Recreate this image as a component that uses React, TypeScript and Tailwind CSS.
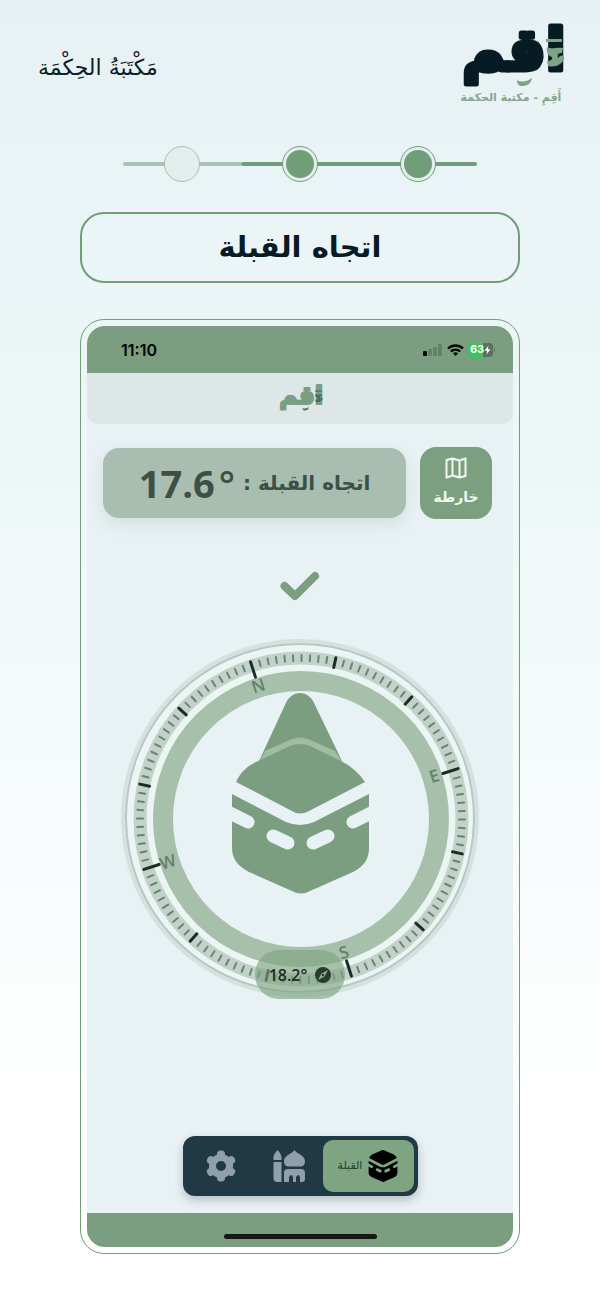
import type { ReactNode } from 'react';

const ARABIC = "font-['DejaVu_Sans',sans-serif]";

const steps = [
  { label: 'الخطوة الثالثة', done: false, bar: 'bg-[#a9c4b2] rounded-l-full' },
  { label: 'الخطوة الثانية', done: true, bar: 'bg-[#6f9e79] rounded-l-full' },
  { label: 'الخطوة الأولى', done: true, bar: 'bg-[#6f9e79] rounded-r-full' },
];

/* Brand word with the leaf ornament over the alef */
function BrandMark({ className, color, accent }: { className: string; color: string; accent: string }) {
  return (
    <svg className={`overflow-visible ${className}`} viewBox="0 0 112 68" role="img" aria-label="أقم">
      <text
        x="59"
        y="46"
        direction="rtl"
        textAnchor="middle"
        fontSize="58"
        className="font-['DejaVu_Sans',sans-serif] font-bold"
        fill={color}
        stroke={color}
        strokeWidth="5"
        strokeLinejoin="round"
      >
        اقم
      </text>
      <path
        d="M91 15h16v3H91zM92 23c5 3 9 0 16 1l-1 5c-4 0-5 2-4 5 3-4 7-3 6 1-2 5-8 9-16 7l-1-5c4 0 6-2 5-4-4-1-6-5-5-10z"
        fill={accent}
      />
      <path d="M62 56c5 3 11 1 15-2-1 6-5 8-10 8-3 0-5-2-5-6z" fill={accent} />
    </svg>
  );
}

function KaabaIcon({ id, className, wide }: { id: string; className: string; wide?: boolean }) {
  return (
    <svg className={className} viewBox="0 0 137 150" fill="currentColor" aria-hidden="true">
      <mask id={id}>
        <rect width="137" height="150" fill="white" />
        <g stroke="black" strokeWidth="13" strokeLinecap="round">
          <path d="M-8 66 16 78" />
          <path d="M145 66 121 78" />
          <path d="m41 92 15 7" />
          <path d="m96 92-15 7" />
        </g>
      </mask>
      {wide ? (
        <path d="M4 38C8 29 15 22 24 18L58 2q10-4 20 0l31 15c10 5 18 12 24 21L77 67q-9 5-17 0z" />
      ) : (
        <path d="M4 38C6 31 11 25 20 20L58 3q10-5 20 0l39 17c9 5 14 11 16 18L77 67q-9 5-17 0z" />
      )}
      <path
        mask={`url(#${id})`}
        d="M0 50 54 78q14 6 28 0l55-28v54c0 12-6 19-16 24L78 147q-9 5-18 0L17 128C6 122 0 115 0 104z"
      />
    </svg>
  );
}

const cardinals = [
  { name: 'N', x: 0, y: -140 },
  { name: 'E', x: 140, y: 0 },
  { name: 'S', x: 0, y: 140 },
  { name: 'W', x: -140, y: 0 },
];

function Dial({ rotation }: { rotation: number }) {
  const ticks = Array.from({ length: 120 }, (_, i) => i * 3);

  return (
    <svg className="h-[360px] w-[360px]" viewBox="0 0 360 360" role="img" aria-label="البوصلة">
      <circle cx="180" cy="180" r="177" fill="none" stroke="#d5e1df" strokeWidth="4" />
      <circle cx="180" cy="180" r="174" fill="#ebf6f4" stroke="#b9c6c4" strokeWidth="2" />
      <circle cx="181" cy="181" r="161" fill="none" stroke="#c1d2c8" strokeWidth="13" />
      <circle cx="181" cy="181" r="138" fill="#e8f1f4" stroke="#a7c0ac" strokeWidth="20" />
      <g transform={`translate(181 181) rotate(${rotation})`}>
        {ticks.map((deg) => {
          const cardinal = deg % 90 === 0;
          const major = deg % 30 === 0;
          return (
            <line
              key={deg}
              y1={major ? -165 : -164}
              y2={cardinal ? -149 : major ? -155 : -158}
              transform={`rotate(${deg})`}
              stroke={major ? '#1d2a26' : '#6f8177'}
              strokeWidth={major ? 3 : 2}
              strokeLinecap="round"
            />
          );
        })}
        {cardinals.map((c) => (
          <text
            key={c.name}
            x={c.x}
            y={c.y + 6}
            textAnchor="middle"
            fontSize="17"
            className="font-['Open_Sans',sans-serif] font-semibold"
            fill="#64806c"
          >
            {c.name}
          </text>
        ))}
      </g>
      {/* Pointer behind the Kaaba */}
      <path d="M139 123 165 67c6-16 24-16 30 0l27 56z" fill="#7c9e80" />
      <path d="M145 113 172 101q8-3 16 0l27 12 7 11-41-14-42 14z" fill="#a0bda2" />
    </svg>
  );
}

function StatusBar() {
  return (
    <div className="flex h-[47px] items-center justify-between bg-[#7c9e80] pl-[34px] pr-[18px]">
      <time className="font-['Inter',sans-serif] text-base font-semibold text-black">11:10</time>
      <div className="flex items-center gap-1">
        <svg className="h-3 w-5" viewBox="0 0 20 12" aria-hidden="true">
          <rect y="7" width="4" height="5" rx="1" fill="#050806" />
          <rect x="5" y="5" width="4" height="7" rx="1" fill="#628169" />
          <rect x="10" y="3" width="4" height="9" rx="1" fill="#628169" />
          <rect x="15" y="0" width="4" height="12" rx="1" fill="#628169" />
        </svg>
        <svg className="h-3 w-[17px]" viewBox="0 0 17 12" fill="none" stroke="#050806" strokeWidth="2.400" aria-hidden="true">
          <path d="M1 4.500a10.800 10.800 0 0 1 15 0" />
          <path d="M3.800 7.500a6.800 6.800 0 0 1 9.400 0" />
          <path d="M8.500 12 6 9.500a3.600 3.600 0 0 1 5 0z" fill="#050806" stroke="none" />
        </svg>
        <div className="flex items-center">
          <div className="flex h-[14px] w-[25px] items-center justify-center rounded bg-linear-to-r from-[#35c759] from-62% to-[#5b705f] to-62% text-white">
            <span className="font-['Inter',sans-serif] text-[11px] font-bold leading-none">63</span>
            <svg className="h-[10px] w-[7px]" viewBox="0 0 7 9" fill="currentColor" aria-hidden="true">
              <path d="M4.500 0 .5 5.200h2.700L2.500 9l4-5.200H3.800z" />
            </svg>
          </div>
          <div className="ml-px h-1 w-px rounded-r bg-[#5b705f]" />
        </div>
      </div>
    </div>
  );
}

function TabButton({ label, children }: { label: string; children: ReactNode }) {
  return (
    <button type="button" aria-label={label} className="flex h-full flex-1 items-center justify-center text-[#8f9fab]">
      {children}
    </button>
  );
}

function TabBar() {
  return (
    <nav className="flex h-[60px] w-[235px] items-center rounded-xl bg-[#213845] p-1 shadow-[0_4px_10px_rgba(30,50,60,0.25)]">
      <TabButton label="الإعدادات">
        <svg className="h-8 w-8" viewBox="-16 -16 32 32" aria-hidden="true">
          <circle r="8.500" fill="none" stroke="currentColor" strokeWidth="7" />
          {[0, 60, 120, 180, 240, 300].map((deg) => (
            <rect key={deg} x="-4" y="-15.500" width="8" height="9" rx="3.500" fill="currentColor" transform={`rotate(${deg})`} />
          ))}
        </svg>
      </TabButton>
      <TabButton label="الصلاة">
        <svg className="h-8 w-8" viewBox="0 0 32 32" fill="currentColor" aria-hidden="true">
          <path d="M4.500 0C7 3 8.500 5 8.500 7v3h-8V7c0-2 1.500-4 4-7z" />
          <path d="M.5 12h8v20h-4q-4 0-4-4z" />
          <path d="M21.500 0c1 3 10.500 5 10.500 11q0 5-4 5.500H15q-4-.5-4-5.500c0-6 9.500-8 10.500-11z" />
          <path d="M11 23q0-4 4-4h13q4 0 4 4v6q0 3-3 3h-2v-5q-1.500-4-4 0v5h-3v-5q-1.500-4-4 0v5h-5z" />
        </svg>
      </TabButton>
      <button
        type="button"
        aria-current="page"
        className="flex h-full w-[91px] items-center justify-center gap-1.5 rounded-[10px] bg-[#7fa482] text-black"
      >
        <span dir="rtl" className={`${ARABIC} text-[11px] text-[#25402f]`}>القبلة</span>
        <KaabaIcon id="tab-kaaba" className="h-8 w-[30px]" />
      </button>
    </nav>
  );
}

function Phone() {
  return (
    <section className="mt-9 w-full rounded-3xl border border-[#6f9e78] p-[6px]">
      <div className="flex flex-col items-center overflow-hidden rounded-[18px] bg-[#e8f1f4]">
        <div className="w-full">
          <StatusBar />
        </div>
        <header className="flex h-[51px] w-full items-center justify-center rounded-b-xl bg-[#dee7e7]">
          <BrandMark className="h-[29px] w-12" color="#7c9e80" accent="#4d7157" />
        </header>

        {/* Bearing */}
        <div className="mt-[23px] flex w-full items-center gap-3.5 pl-4 pr-[21px]">
          <div
            dir="rtl"
            className="flex h-[70px] flex-1 items-center justify-center gap-2 rounded-2xl bg-[#a9bdb1] text-[#3d5044] shadow-[0_6px_16px_rgba(120,150,130,0.18)]"
          >
            <h2 className={`${ARABIC} text-xl font-bold`}>اتجاه القبلة :</h2>
            <p dir="ltr" className="flex gap-1 font-['Open_Sans',sans-serif] text-[38px] font-bold leading-none">
              17.6<span className="font-semibold">°</span>
            </p>
          </div>
          <button
            type="button"
            className="flex h-[72px] w-[72px] flex-col items-center justify-center gap-1.5 rounded-2xl bg-[#7c9f7f] text-[#f0f8f5]"
          >
            <svg className="h-[22px] w-[22px]" viewBox="0 0 22 22" fill="none" stroke="currentColor" strokeWidth="2" strokeLinejoin="round" aria-hidden="true">
              <path d="M1.500 3 7.500 1.500l7 2 6-2V19l-6 1.500-7-2-6 2zM7.500 1.500v17M14.500 3.500v17" />
            </svg>
            <span dir="rtl" className={`${ARABIC} text-sm font-bold leading-6`}>خارطة</span>
          </button>
        </div>

        <svg className="mt-[51px] h-8 w-10" viewBox="0 0 40 32" fill="none" stroke="#7c9e80" strokeWidth="8" strokeLinecap="round" strokeLinejoin="round" aria-hidden="true">
          <path d="M4.500 16 15 26 35 6" />
        </svg>

        {/* Compass */}
        <div className="relative mt-9">
          <Dial rotation={-17.8} />
          <KaabaIcon id="dial-kaaba" wide className="absolute left-28 top-[106px] h-[150px] w-[137px] text-[#7c9e80]" />
          <div className="absolute bottom-[-1px] left-1/2 flex h-[49px] w-[90px] -translate-x-1/2 items-center justify-center gap-2 rounded-3xl bg-[#7fa583]/65 text-[#1f2d25]">
            <span className="font-['Open_Sans',sans-serif] text-base font-semibold">18.2°</span>
            <svg className="h-4 w-4" viewBox="0 0 16 16" aria-hidden="true">
              <circle cx="8" cy="8" r="8" fill="#2a3c31" />
              <path d="m13 3-3.500 6.500L3 13l3.500-6.500z" fill="#8fb193" />
              <circle cx="8" cy="8" r="1.200" fill="#2a3c31" />
            </svg>
          </div>
        </div>

        <div className="mb-[17px] mt-[138px]">
          <TabBar />
        </div>
        <div className="flex h-[34px] w-full items-end justify-center bg-[#7c9e80] pb-2">
          <div className="h-[5px] w-[153px] rounded-full bg-[#141816]" />
        </div>
      </div>
    </section>
  );
}

export default function App() {
  return (
    <main className="min-h-screen bg-linear-to-b from-[#e7f1f4] via-[#eff8f8] via-40% to-white to-85% pb-[46px]">
      <header className="flex items-start justify-between pl-[38px] pr-[33px] pt-6">
        <p dir="rtl" className={`${ARABIC} mt-6 text-[22px] font-normal leading-10 text-[#0a2028]`}>مَكْتَبَةُ الحِكْمَة</p>
        <div className="flex flex-col items-center">
          <BrandMark className="h-[68px] w-[112px]" color="#061b24" accent="#7fa485" />
          <p dir="rtl" className={`${ARABIC} text-[11px] font-bold leading-3 text-[#84a58c]`}>أَقِمِ - مكتبة الحكمة</p>
        </div>
      </header>

      {/* Progress */}
      <ol className="mx-auto mt-[42px] flex w-[354px]">
        {steps.map((step) => (
          <li key={step.label} aria-label={step.label} className="grid flex-1 items-center justify-items-center">
            <span className={`col-start-1 row-start-1 h-1 w-full ${step.bar}`} />
            <span className={`col-start-1 row-start-1 flex h-9 w-9 items-center justify-center rounded-full border bg-[#e3efec] ${step.done ? 'border-[#6f9e79]' : 'border-[#a9bfb0]'}`}>
              {step.done && <span className="h-7 w-7 rounded-full bg-[#6f9e79]" />}
            </span>
          </li>
        ))}
      </ol>

      <div className="mt-[30px] flex flex-col items-center px-20">
        <h1 dir="rtl" className={`${ARABIC} flex h-[71px] w-full items-center justify-center rounded-3xl border-2 border-[#6f9e79] text-[29px] font-bold text-[#061b24]`}>
          اتجاه القبلة
        </h1>
        <Phone />
      </div>
    </main>
  );
}
